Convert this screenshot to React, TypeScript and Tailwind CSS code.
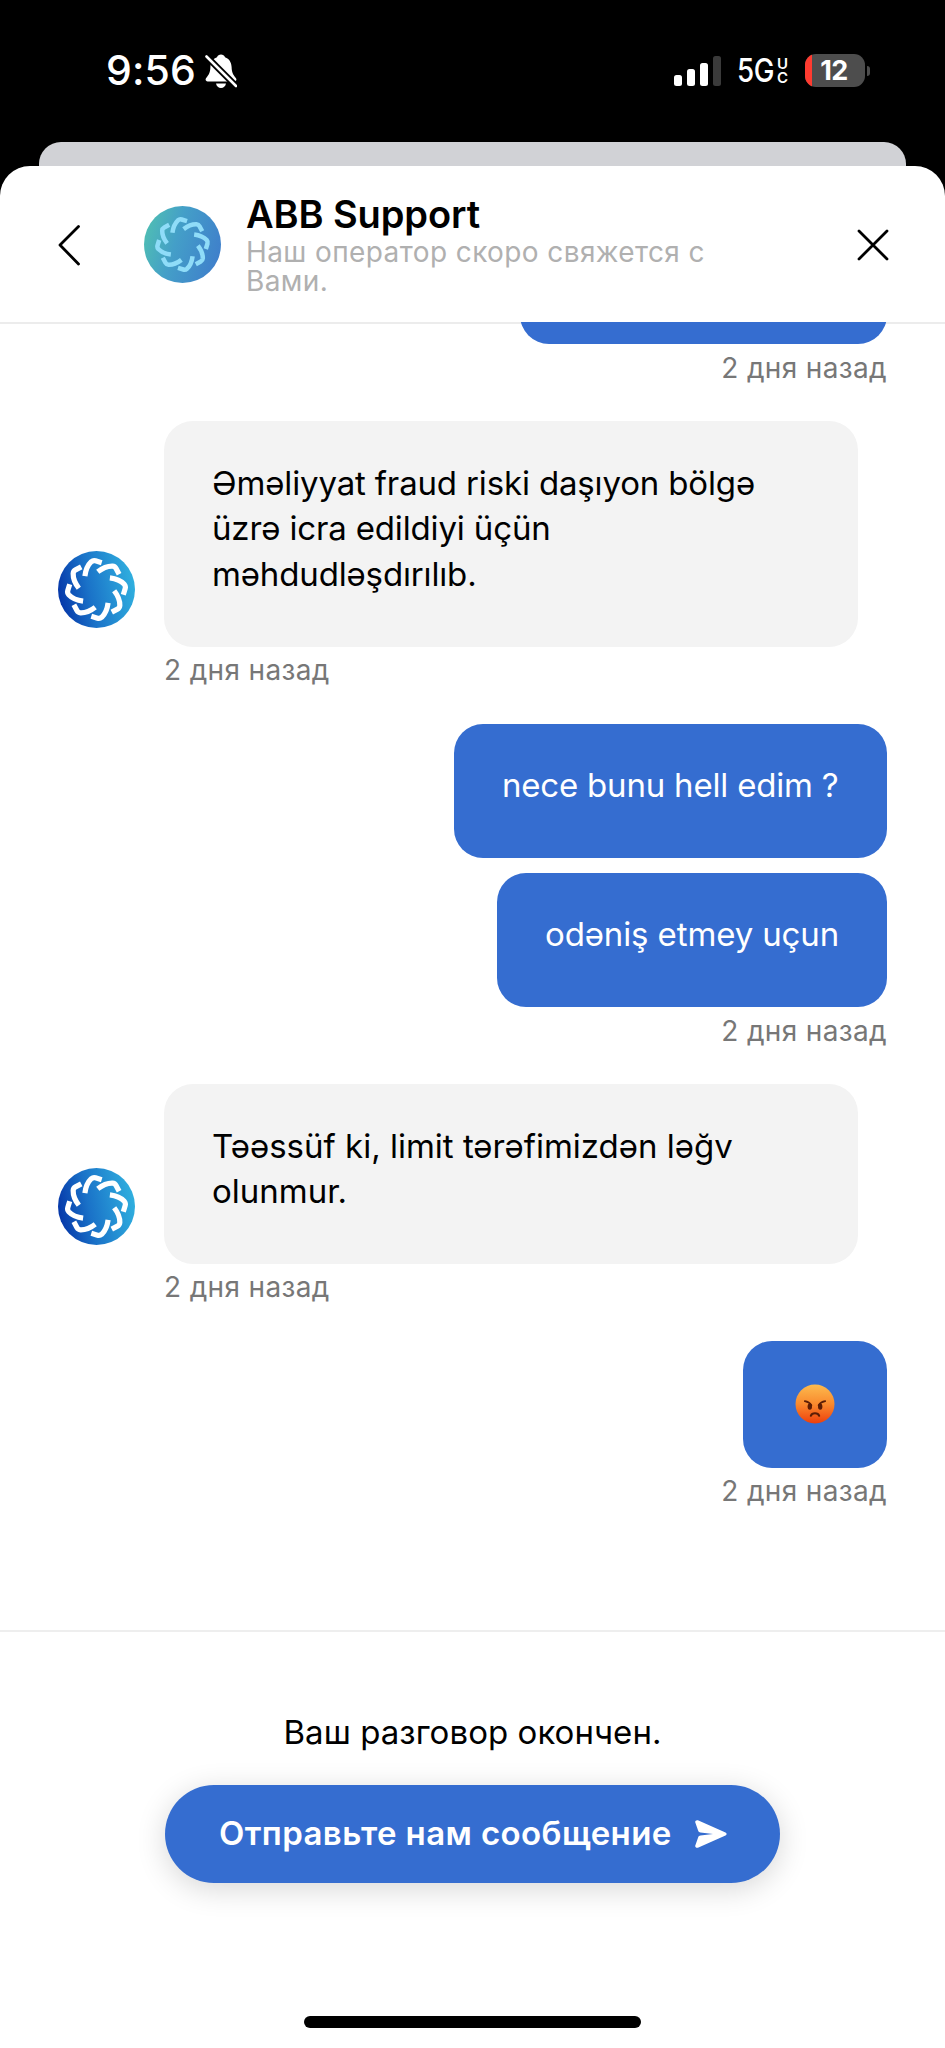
import { useId } from "react";

type Message = {
  lines: string[];
  className: string;
};

type Group = {
  from: "operator" | "user";
  messages: Message[];
};

const TIME_LABEL = "2 дня назад";

const GROUPS: Group[] = [
  {
    from: "operator",
    messages: [
      {
        lines: [
          "Əməliyyat fraud riski daşıyon bölgə",
          "üzrə icra edildiyi üçün",
          "məhdudləşdırılıb.",
        ],
        className: "w-[694px] tracking-[-0.15px]",
      },
    ],
  },
  {
    from: "user",
    messages: [
      { lines: ["nece bunu hell edim ?"], className: "w-[433px] tracking-[-0.2px]" },
      { lines: ["odəniş etmey uçun"], className: "w-[390px] tracking-[-0.12px]" },
    ],
  },
  {
    from: "operator",
    messages: [
      {
        lines: ["Təəssüf ki, limit tərəfimizdən ləğv", "olunmur."],
        className: "w-[694px]",
      },
    ],
  },
];

const PETALS = [0, 45, 90, 135, 180, 225, 270, 315];

function Avatar({ soft = false }: { soft?: boolean }) {
  const id = useId();
  return (
    <svg viewBox="-38.5 -38.5 77 77" className="size-[77px] shrink-0">
      <defs>
        <linearGradient id={id} x1="0" y1={soft ? "0.35" : "0.6"} x2="1" y2={soft ? "0.65" : "0.4"}>
          <stop offset="0" stopColor={soft ? "#4fbdb4" : "#0536a8"} />
          <stop offset="0.4" stopColor={soft ? "#449fc8" : "#1a72c8"} />
          <stop offset="1" stopColor={soft ? "#3f7fcb" : "#30b0df"} />
        </linearGradient>
      </defs>
      <circle r="38.5" fill={`url(#${id})`} />
      <g transform={soft ? "scale(0.87)" : undefined}>
        {PETALS.map((deg) => (
          <path
            key={deg}
            transform={`rotate(${deg})`}
            d="M-11.6 -13.4C-10.9 -19 -8.7 -24.5 -5.2 -27.8Q-3.3 -29.4 -1 -28.7L5.2 -26.8"
            fill="none"
            stroke={soft ? "#8fdcf8" : "#fff"}
            strokeWidth="5.2"
          />
        ))}
      </g>
    </svg>
  );
}

function StatusBar() {
  return (
    <div className="flex h-[142px] items-start justify-between pl-[106px] pr-[75px] pt-[50px] text-white">
      <div className="flex items-center">
        <span className="w-[99px] whitespace-nowrap text-[41px] font-medium leading-[41px] tracking-[0.1px]">9:56</span>
        <svg viewBox="0 0 32 34" className="h-[34px] w-8">
          <path
            d="M16 .5c-1.800 0-3.400 1.100-4 2.700C7.600 4.800 5.600 8.500 5.400 13 5.200 18.500 4 20.600 1.200 24c-1.300 1.600-.4 3.500 1.400 3.500h26.800c1.800 0 2.700-1.900 1.400-3.500-2.800-3.400-4-5.500-4.200-11C26.400 8.500 24.400 4.800 20 3.200 19.400 1.600 17.800.5 16 .5Z"
            fill="#fff"
          />
          <path d="M11 29.500h10c-.6 2.800-2.500 4.500-5 4.500s-4.400-1.700-5-4.500Z" fill="#fff" />
          <path d="M1.500 2.500 31 32" stroke="#000" strokeWidth="6.500" />
          <path d="M1.500 2.500 31 32" stroke="#fff" strokeWidth="2.600" strokeLinecap="round" />
        </svg>
      </div>

      <div className="flex h-[41px] items-center">
        <div className="flex h-[30px] items-end gap-[5px]">
          <div className="h-[11px] w-2 rounded-[2.5px] bg-white" />
          <div className="h-[17px] w-2 rounded-[2.5px] bg-white" />
          <div className="h-[23px] w-2 rounded-[2.5px] bg-white" />
          <div className="h-[30px] w-2 rounded-[2.5px] bg-[#3a3a3a]" />
        </div>
        <div className="ml-4 flex items-center">
          <span className="w-10 origin-left scale-x-[0.84] whitespace-nowrap text-[33px] font-medium leading-[33px] tracking-[-0.5px]">
            5G
          </span>
          <span className="flex w-3 flex-col text-[15px] font-semibold leading-[14px]">
            <span>U</span>
            <span>C</span>
          </span>
        </div>
        <div className="ml-4 flex items-center gap-[2px]">
          <div className="flex h-[33px] w-[60px] items-center overflow-hidden rounded-[11px] bg-[#4d4d4d]">
            <div className="h-full w-[7px] bg-[#ff3b30]" />
            <span className="flex-1 pr-[9px] text-center text-[27px] font-bold leading-none tracking-[-0.5px]">12</span>
          </div>
          <div className="h-[10px] w-[3px] rounded-r-full bg-[#4d4d4d]" />
        </div>
      </div>
    </div>
  );
}

function Header() {
  return (
    <header className="flex h-[156px] shrink-0 rounded-t-[30px] bg-white pl-[57px] pr-14">
      <svg viewBox="0 0 24 42" className="mt-[58px] h-[42px] w-6" fill="none" stroke="#000" strokeWidth="2.800" strokeLinecap="round" strokeLinejoin="round">
        <path d="M21.500 2.500 3 21l18.500 19" />
      </svg>
      <div className="ml-[63px] mt-10">
        <Avatar soft />
      </div>
      <div className="ml-[25px] mt-[25px] flex-1">
        <h1 className="whitespace-nowrap text-[38px] font-semibold leading-[46px] tracking-[-0.1px] text-black">
          ABB Support
        </h1>
        <p className="mt-px whitespace-nowrap text-[28px] leading-[29px] tracking-[0.4px] text-[#b0b0b0]">
          Наш оператор скоро свяжется с
          <br />
          Вами.
        </p>
      </div>
      <svg viewBox="0 0 32 32" className="mt-[63px] size-8" fill="none" stroke="#000" strokeWidth="2.800" strokeLinecap="round">
        <path d="M2 2l28 28M30 2 2 30" />
      </svg>
    </header>
  );
}

function TimeLabel() {
  return (
    <div className="h-[77px] whitespace-nowrap pt-[6.5px] text-[28px] leading-[34px] tracking-[0.35px] text-[#777777]">
      {TIME_LABEL}
    </div>
  );
}

function AngryFace() {
  return (
    <svg viewBox="0 0 40 40" className="size-10">
      <defs>
        <linearGradient id="angry" x1="0" y1="0" x2="0" y2="1">
          <stop offset="0" stopColor="#fdbb4e" />
          <stop offset="0.5" stopColor="#f98a2e" />
          <stop offset="1" stopColor="#ee3f0b" />
        </linearGradient>
      </defs>
      <circle cx="20" cy="20" r="19.500" fill="url(#angry)" />
      <g fill="#5b1d06">
        <ellipse cx="14.800" cy="22.600" rx="2.200" ry="3.200" />
        <ellipse cx="25.200" cy="22.600" rx="2.200" ry="3.200" />
      </g>
      <g fill="none" stroke="#5b1d06" strokeWidth="1.700" strokeLinecap="round">
        <path d="M9.800 17.200c1.800.3 5 1.600 6.600 4" />
        <path d="M30.200 17.200c-1.800.3-5 1.600-6.600 4" />
        <path d="M15.800 31.800c1.200-3.300 7.200-3.300 8.400 0" strokeWidth="2" />
      </g>
    </svg>
  );
}

function MessageGroup({ group }: { group: Group }) {
  const mine = group.from === "user";
  return (
    <div className={mine ? "flex justify-end" : "flex"}>
      {!mine && (
        <div className="mr-[29px] flex flex-col justify-end pb-[96px]">
          <Avatar />
        </div>
      )}
      <div className={mine ? "flex flex-col items-end" : "flex flex-col items-start"}>
        <div className={mine ? "flex flex-col items-end gap-[15px]" : "flex flex-col"}>
          {group.messages.map((m, i) => (
            <div
              key={i}
              className={`${m.className} rounded-[29px] px-12 pb-[49px] pt-[39.5px] text-[33px] leading-[45.7px] ${
                mine ? "bg-[#356dd0] text-white" : "bg-[#f3f3f3] text-black"
              }`}
            >
              {m.lines.map((line) => (
                <p key={line} className="whitespace-nowrap">
                  {line}
                </p>
              ))}
            </div>
          ))}
        </div>
        <TimeLabel />
      </div>
    </div>
  );
}

export default function App() {
  return (
    <div className="flex h-[2048px] w-[945px] flex-col overflow-hidden bg-black font-['Inter',sans-serif]">
      <StatusBar />
      {/* Sheet behind the chat */}
      <div className="mx-[39px] h-6 shrink-0 rounded-t-[22px] bg-[#d1d2d6]" />
      <Header />

      {/* Conversation */}
      <main className="flex h-[1308px] shrink-0 flex-col overflow-hidden bg-white px-[58px] shadow-[inset_0_2px_0_#ececec]">
        <div className="-mt-[112px] flex shrink-0 flex-col items-end">
          <div className="h-[134px] w-[367px] rounded-[29px] bg-[#356dd0]" />
          <TimeLabel />
        </div>
        {GROUPS.map((group, i) => (
          <MessageGroup key={i} group={group} />
        ))}
        <div className="flex flex-col items-end">
          <div className="flex h-[127px] w-36 justify-center rounded-[29px] bg-[#356dd0] pt-[43px]">
            <AngryFace />
          </div>
          <TimeLabel />
        </div>
      </main>

      {/* Footer */}
      <footer className="flex flex-1 flex-col items-center border-t-2 border-[#eeeeee] bg-white">
        <p className="mt-[80px] whitespace-nowrap text-[33px] leading-[40px] tracking-[0.05px] text-black">
          Ваш разговор окончен.
        </p>
        <button className="mt-[33px] flex h-[98px] w-[615px] items-center rounded-full bg-[#356dd0] pl-[54px] text-white shadow-[0_6px_30px_rgba(0,0,0,0.16)]">
          <span className="w-[476px] whitespace-nowrap text-left text-[33px] font-semibold tracking-[0.4px]">
            Отправьте нам сообщение
          </span>
          <svg viewBox="0 0 32 28" className="h-7 w-8" fill="#fff">
            <path d="M.3 2.600C-.2.900 1.300-.3 2.900.3L30.500 12.500c1.500.7 1.500 2.300 0 3L2.900 27.700C1.300 28.300-.2 27.100.3 25.400L3.200 17.200C3.600 16 4.300 15.600 5.500 15.400L18 14 5.500 12.600C4.300 12.400 3.600 12 3.200 10.800Z" />
          </svg>
        </button>
        <div className="mt-[133px] h-3 w-[337px] rounded-full bg-black" />
      </footer>
    </div>
  );
}
